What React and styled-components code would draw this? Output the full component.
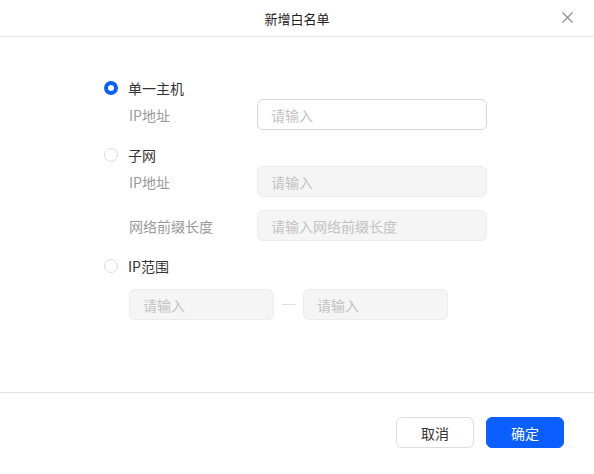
import React from 'react';
import styled, { createGlobalStyle } from 'styled-components';

const GlobalStyle = createGlobalStyle`
  html, body {
    margin: 0;
    padding: 0;
    background: #fff;
  }
  body {
    font-family: "Noto Sans CJK SC", "Noto Sans", sans-serif;
    font-size: 14px;
    color: #333;
  }
  * { box-sizing: border-box; }
`;

const Dialog = styled.div`
  width: 594px;
  height: 474px;
  display: flex;
  flex-direction: column;
  background: #fff;
`;

const Header = styled.div`
  height: 37px;
  flex-shrink: 0;
  display: flex;
  align-items: center;
  justify-content: center;
  position: relative;
  border-bottom: 1px solid #e6e6e6;
  font-size: 13px;
  color: #222;
`;

const Close = styled.button`
  position: absolute;
  right: 20px;
  top: 11px;
  width: 13px;
  height: 13px;
  padding: 0;
  border: none;
  background: none;
  cursor: pointer;
  svg { display: block; }
`;

const Body = styled.div`
  flex: 1;
  padding: 41px 0 0 104px;
  display: flex;
  flex-direction: column;
  gap: 15px;
`;

const Group = styled.div`
  display: flex;
  flex-direction: column;
`;

const RadioRow = styled.label`
  height: 20px;
  display: flex;
  align-items: center;
  gap: 10px;
  color: #333;
  cursor: pointer;
`;

const RadioDot = styled.span`
  width: 14px;
  height: 14px;
  border-radius: 50%;
  flex-shrink: 0;
  background: #fff;
  border: ${p => (p.$checked ? '4px solid #0a5ffe' : '1px solid #dcdcdc')};
`;

const Fields = styled.div`
  margin-top: ${p => p.$offset}px;
  padding-left: 25px;
  display: flex;
  flex-direction: column;
  gap: 13px;
`;

const FieldRow = styled.div`
  display: flex;
  align-items: center;
`;

const Label = styled.span`
  width: 128px;
  color: #999;
`;

const Input = styled.input`
  width: ${p => p.$width}px;
  height: 31px;
  padding: 0 13px;
  border-radius: 6px;
  border: 1px solid ${p => (p.disabled ? '#ececec' : '#d6d6d6')};
  background: ${p => (p.disabled ? '#f5f5f5' : '#fff')};
  font-family: inherit;
  font-size: 14px;
  color: #333;
  outline: none;
  &::placeholder { color: #c2c2c2; }
`;

const Dash = styled.span`
  width: 29px;
  display: flex;
  justify-content: center;
  &::before {
    content: '';
    width: 14px;
    height: 1px;
    background: #e0e0e0;
  }
`;

const Footer = styled.div`
  height: 82px;
  flex-shrink: 0;
  border-top: 1px solid #e6e6e6;
  display: flex;
  justify-content: flex-end;
  align-items: flex-start;
  padding: 24px 30px 0 0;
  gap: 12px;
`;

const Button = styled.button`
  width: 78px;
  height: 31px;
  border-radius: 6px;
  font-family: inherit;
  font-size: 14px;
  cursor: pointer;
  border: 1px solid ${p => (p.$primary ? '#0a5ffe' : '#dcdcdc')};
  background: ${p => (p.$primary ? '#0a5ffe' : '#fff')};
  color: ${p => (p.$primary ? '#fff' : '#333')};
`;

function Radio({ checked, children }) {
  return (
    <RadioRow>
      <RadioDot $checked={checked} />
      {children}
    </RadioRow>
  );
}

export default function App() {
  const [mode] = React.useState('host');
  return (
    <>
      <GlobalStyle />
      <Dialog>
        <Header>
          新增白名单
          <Close aria-label="关闭">
            <svg width="13" height="13" viewBox="0 0 13 13">
              <path d="M1.5 1.5L11.5 11.5M11.5 1.5L1.5 11.5" stroke="#8a8a8a" strokeWidth="1.1" fill="none" />
            </svg>
          </Close>
        </Header>

        <Body>
          <Group>
            <Radio checked={mode === 'host'}>单一主机</Radio>
            <Fields $offset={1}>
              <FieldRow>
                <Label>IP地址</Label>
                <Input $width={230} placeholder="请输入" disabled={mode !== 'host'} />
              </FieldRow>
            </Fields>
          </Group>

          <Group>
            <Radio checked={mode === 'subnet'}>子网</Radio>
            <Fields $offset={1}>
              <FieldRow>
                <Label>IP地址</Label>
                <Input $width={230} placeholder="请输入" disabled={mode !== 'subnet'} />
              </FieldRow>
              <FieldRow>
                <Label>网络前缀长度</Label>
                <Input $width={230} placeholder="请输入网络前缀长度" disabled={mode !== 'subnet'} />
              </FieldRow>
            </Fields>
          </Group>

          <Group>
            <Radio checked={mode === 'range'}>IP范围</Radio>
            <Fields $offset={13}>
              <FieldRow>
                <Input $width={145} placeholder="请输入" disabled={mode !== 'range'} />
                <Dash />
                <Input $width={145} placeholder="请输入" disabled={mode !== 'range'} />
              </FieldRow>
            </Fields>
          </Group>
        </Body>

        <Footer>
          <Button>取消</Button>
          <Button $primary>确定</Button>
        </Footer>
      </Dialog>
    </>
  );
}
